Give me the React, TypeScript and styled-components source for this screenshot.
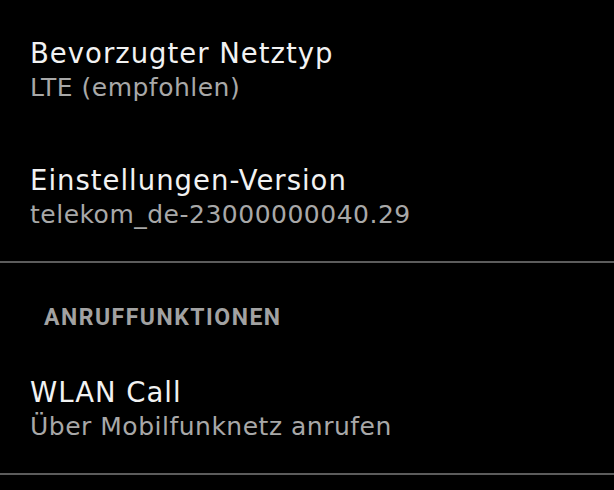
import React from "react";
import {createGlobalStyle, styled} from "styled-components";

const GlobalStyle = createGlobalStyle`
  html, body {
    margin: 0;
    padding: 0;
    background: #000;
  }
  body {
    font-family: "DejaVu Sans", "Noto Sans", sans-serif;
    -webkit-font-smoothing: antialiased;
  }
`;

const Screen = styled.div`
  width: 614px;
  height: 490px;
  overflow: hidden;
  background: #000;
  display: flex;
  flex-direction: column;
  padding-top: 7px;
  box-sizing: border-box;
`;

const Item = styled.div`
  display: flex;
  flex-direction: column;
  padding: 27px 30px 30px;
`;

const Title = styled.div`
  color: #f2f2f2;
  font-size: 27.5px;
  line-height: 38px;
  letter-spacing: 1px;
`;

const Summary = styled.div`
  color: #a8a8a8;
  font-size: 25px;
  line-height: 32px;
  letter-spacing: 0.5px;
`;

const Divider = styled.div`
  height: 2px;
  background: #5c5c5c;
  flex-shrink: 0;
`;

const Category = styled.div`
  color: #a2a2a2;
  font-family: Roboto, "Noto Sans", sans-serif;
  font-size: 23px;
  font-weight: 700;
  letter-spacing: 1.5px;
  line-height: 28px;
  padding: 41px 44px 14px;
`;

interface IPref {
    title: string,
    summary: string
}

const Preference: React.FC<IPref> = ({title, summary}) => (
    <Item>
        <Title>{title}</Title>
        <Summary>{summary}</Summary>
    </Item>
);

const App: React.FC = () => (
    <Screen>
        <GlobalStyle/>
        <Preference title={'Bevorzugter Netztyp'} summary={'LTE (empfohlen)'}/>
        <Preference title={'Einstellungen-Version'} summary={'telekom_de-23000000040.29'}/>
        <Divider/>
        <Category>ANRUFFUNKTIONEN</Category>
        <Preference title={'WLAN Call'} summary={'Über Mobilfunknetz anrufen'}/>
        <Divider/>
    </Screen>
);

export default App;
